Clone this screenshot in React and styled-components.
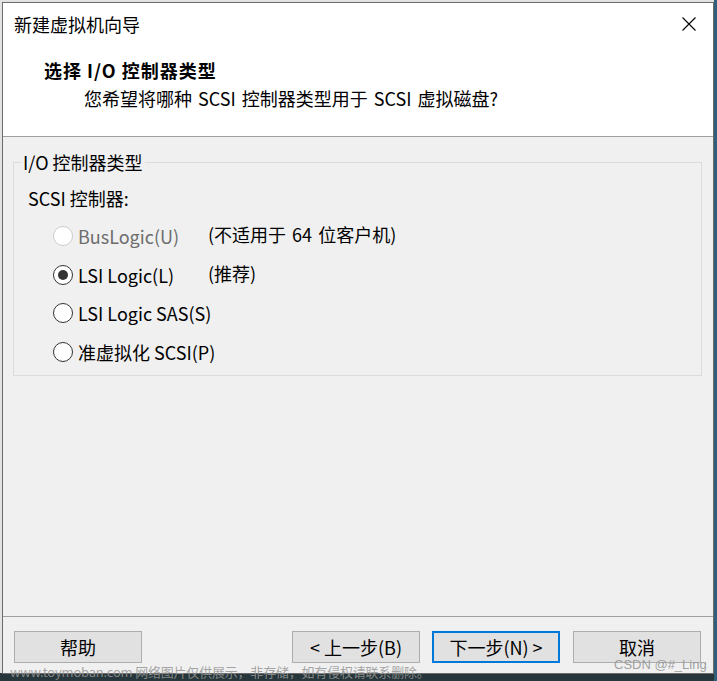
import React from 'react';
import styled, { createGlobalStyle } from 'styled-components';

const GlobalStyle = createGlobalStyle`
  html, body {
    margin: 0;
    padding: 0;
    height: 100%;
  }
  body {
    width: 717px;
    height: 681px;
    overflow: hidden;
    position: relative;
    font-family: "Noto Sans CJK SC", "Noto Sans", sans-serif;
    background:
      linear-gradient(to right, transparent 714px, #2f5f7a 714px),
      linear-gradient(to bottom, #e2e2e2 0, #e2e2e2 673px, #27363b 673px);
  }
`;

const Window = styled.div`
  box-sizing: border-box;
  margin: 2px 0 0 2px;
  width: 712px;
  height: 672px;
  border: 1px solid #6b6b6b;
  background: #f0f0f0;
  display: flex;
  flex-direction: column;
  color: #000;
  font-size: 18px;
`;

const TitleBar = styled.div`
  height: 42px;
  background: #fff;
  display: flex;
  align-items: center;
  justify-content: space-between;
  padding: 0 17px 0 11px;
`;

const TitleText = styled.span`
  font-size: 18px;
  line-height: 42px;
`;

const CloseButton = styled.span`
  display: flex;
  width: 14px;
  height: 14px;
`;

const Header = styled.div`
  background: #fff;
  padding: 12px 0 25px 41px;
  border-bottom: 1px solid #a0a0a0;
`;

const HeaderTitle = styled.div`
  font-weight: 700;
  line-height: 26px;
  letter-spacing: 1px;
`;

const HeaderSub = styled.div`
  margin-top: 2px;
  padding-left: 40px;
  line-height: 26px;
  word-spacing: 2px;
`;

const Body = styled.div`
  flex: 1;
  padding: 12px 11px 0 10px;
`;

const Group = styled.fieldset`
  margin: 0;
  padding: 10px 0 4px 0;
  border: 1px solid #dcdcdc;
`;

const Legend = styled.legend`
  margin-left: 7px;
  padding: 0 2px;
  line-height: 26px;
`;

const GroupLabel = styled.div`
  padding-left: 14px;
  line-height: 26px;
`;

const Options = styled.div`
  margin-top: 6px;
  display: grid;
  grid-template-columns: 155px 1fr;
  grid-auto-rows: 38.6px;
  padding-left: 39px;
  align-items: center;
`;

const Option = styled.label`
  display: flex;
  align-items: center;
  gap: 5px;
  color: ${p => (p.disabled ? '#6d6d6d' : '#000')};
  white-space: nowrap;
`;

const Radio = styled.span`
  box-sizing: border-box;
  width: 20px;
  height: 20px;
  border-radius: 50%;
  border: 1px solid ${p => (p.disabled ? '#cccccc' : '#333333')};
  background: #fff;
  display: flex;
  align-items: center;
  justify-content: center;
  flex-shrink: 0;

  &::after {
    content: '';
    width: 10px;
    height: 10px;
    border-radius: 50%;
    background: #333;
    display: ${p => (p.checked ? 'block' : 'none')};
  }
`;

const Note = styled.span`
  white-space: nowrap;
  margin-top: -4px;
  word-spacing: 2px;
`;

const Footer = styled.div`
  height: 57px;
  border-top: 1px solid #a0a0a0;
  box-sizing: border-box;
  padding: 14px 12px 0 11px;
  display: flex;
  align-items: flex-start;
`;

const Button = styled.button`
  box-sizing: border-box;
  width: 128px;
  height: 32px;
  margin-left: ${p => p.$gap || 0}px;
  background: #e1e1e1;
  border: ${p => (p.$primary ? '2px solid #0078d7' : '1px solid #adadad')};
  font-family: inherit;
  font-size: 18px;
  color: #000;
  padding: 0;
  display: flex;
  align-items: center;
  justify-content: center;
`;

const Watermark = styled.div`
  position: absolute;
  left: 10px;
  top: 662px;
  font-size: 13px;
  letter-spacing: -0.2px;
  color: rgba(150, 150, 150, 0.85);
  white-space: nowrap;
  line-height: 20px;
`;

const Credit = styled.div`
  position: absolute;
  left: 614px;
  top: 656px;
  font-size: 13px;
  color: rgba(150, 150, 150, 0.9);
  font-family: "Liberation Sans", sans-serif;
  line-height: 18px;
`;

const options = [
  { label: 'BusLogic(U)', note: '(不适用于 64 位客户机)', disabled: true },
  { label: 'LSI Logic(L)', note: '(推荐)', checked: true },
  { label: 'LSI Logic SAS(S)' },
  { label: '准虚拟化 SCSI(P)' },
];

export default function App() {
  return (
    <>
      <GlobalStyle />
      <Window>
        <TitleBar>
          <TitleText>新建虚拟机向导</TitleText>
          <CloseButton>
            <svg width="14" height="14" viewBox="0 0 14 14">
              <path d="M0.5 0.5 L13.5 13.5 M13.5 0.5 L0.5 13.5" stroke="#000" strokeWidth="1.1" fill="none" />
            </svg>
          </CloseButton>
        </TitleBar>
        <Header>
          <HeaderTitle>选择 I/O 控制器类型</HeaderTitle>
          <HeaderSub>您希望将哪种 SCSI 控制器类型用于 SCSI 虚拟磁盘?</HeaderSub>
        </Header>
        <Body>
          <Group>
            <Legend>I/O 控制器类型</Legend>
            <GroupLabel>SCSI 控制器:</GroupLabel>
            <Options>
              {options.map(o => (
                <React.Fragment key={o.label}>
                  <Option disabled={o.disabled}>
                    <Radio disabled={o.disabled} checked={o.checked} />
                    {o.label}
                  </Option>
                  <Note>{o.note}</Note>
                </React.Fragment>
              ))}
            </Options>
          </Group>
        </Body>
        <Footer>
          <Button>帮助</Button>
          <Button $gap={150}>&lt; 上一步(B)</Button>
          <Button $gap={12} $primary>下一步(N) &gt;</Button>
          <Button $gap={13}>取消</Button>
        </Footer>
      </Window>
      <Watermark>www.toymoban.com 网络图片仅供展示，非存储，如有侵权请联系删除。</Watermark>
      <Credit>CSDN @#_Ling</Credit>
    </>
  );
}
